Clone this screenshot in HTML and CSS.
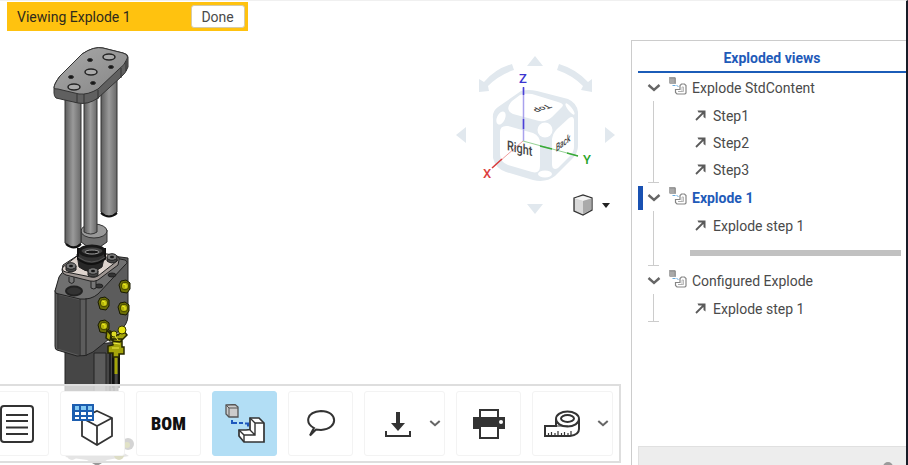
FILE: index.html
```html
<!DOCTYPE html>
<html lang="en">
<head>
<meta charset="utf-8">
<title>Exploded views</title>
<link rel="stylesheet" href="styles.css">
</head>
<body>
<svg class="defs" aria-hidden="true">
  <defs>
    <linearGradient id="rod"><stop offset="0" stop-color="#5c5c5c"/><stop offset=".5" stop-color="#9a9a9a"/><stop offset="1" stop-color="#686868"/></linearGradient>
    <linearGradient id="plate" x2="1" y2="1"><stop offset="0" stop-color="#aaa"/><stop offset="1" stop-color="#858585"/></linearGradient>
    <symbol id="chevron" viewBox="0 0 14 10"><path d="M1.500 2l5.500 5 5.500-5" fill="none" stroke="currentColor" stroke-width="2.400"/></symbol>
    <symbol id="explode-small" viewBox="0 0 18 18">
      <path d="M0 0h6l1 1v6H1L0 6z" fill="#a9a9a9"/><path d="M1 1h5v5" fill="none" stroke="#888" stroke-width=".8"/>
      <path d="M3.500 8.500h4l2 1" fill="none" stroke="#65a9dd" stroke-dasharray="3 1"/>
      <path d="M6.500 12.500h4.500V8.500l1.500-1.500h3l1.500 1.500v7.500l-1 1H8l-1.500-1.500z" fill="#fff" stroke="#858585" stroke-width="1.200"/>
      <path d="M9 14.500h4V10h1.500v4.500z" fill="none" stroke="#aaa" stroke-width=".8"/>
    </symbol>
    <symbol id="step" viewBox="0 0 11 11"><path d="M1 10l7-7" stroke="currentColor" stroke-width="1.800"/><path d="M2.500.500h8v8l-2-1.500V4.500L6.500 2.500h-3z" fill="currentColor"/></symbol>
    <g id="bolt"><path d="M-5-1l2-4 5-1 4 3v6l-3 4-6-1z" fill="#6e7006" stroke="#171800"/><circle cx="1" r="3.800" fill="#b5b50c" stroke="#414200"/><path d="M-1-2l3 1v3" fill="none" stroke="#efed20"/></g>
    <g id="screw"><path d="M-5 0v4q5 4 10 0V0" fill="#444" stroke="#1c1c1c"/><ellipse rx="5" ry="3.300" fill="#777" stroke="#222"/><ellipse rx="2" ry="1.300" fill="#161616"/></g>
  </defs>
</svg>
<div class="app">
  <main class="viewport">
    <svg class="model" width="160" height="465" viewBox="0 0 160 465" role="img" aria-label="Exploded cylinder assembly">
      <g stroke="#333" stroke-width="1">
        <path d="M101 75v137q8 9 16 0V75z" fill="url(#rod)"/>
        <path d="M81 230v12q13 12 26 0v-12z" fill="#707070"/>
        <ellipse cx="94" cy="231" rx="13" ry="7" fill="#999"/>
        <path d="M84 90v142q7 4 13 0V90z" fill="url(#rod)"/>
        <path d="M65 95v148q8 8 16 0V95z" fill="url(#rod)"/>
        <path d="M66 244q8 7 15 0M101 213q8 7 16 0" fill="none" stroke="#111" stroke-width="2"/>
        <path d="M54 88q0-4 6-12l22-22q12-8 21-6l20 5q5 1 5 4v10q-2 6-7 10L98 98q-10 7-20 5l-22-5q-2-2-2-5z" fill="#606060"/>
        <path d="M54 88q0-4 6-12l22-22q12-8 21-6l20 5q6 2 4 6-2 6-9 11L98 89q-10 6-19 5l-21-5q-4 0-4-1z" fill="url(#plate)"/>
        <path d="M77 94v9m7-9v9m14-13v9m23-31v10m5-17v10" fill="none"/>
        <g fill="#aaa" stroke="#252525" stroke-width="1.500"><ellipse cx="109" cy="57" rx="6" ry="3"/><ellipse cx="91" cy="72" rx="6" ry="3"/><ellipse cx="74" cy="87" rx="6" ry="3"/></g>
        <g fill="#151515"><ellipse cx="90" cy="60" rx="2.500" ry="1.500"/><ellipse cx="111" cy="67" rx="2.500" ry="1.500"/><ellipse cx="71" cy="77" rx="2.500" ry="1.500"/><ellipse cx="93" cy="83" rx="2.500" ry="1.500"/></g>
      </g>
      <g stroke="#222">
        <path d="M65 347v93h53v-98z" fill="#464646"/>
        <path d="M94 353h12v87H94z" fill="#5c5c5c"/><path d="M110 345v95M114 345v95" stroke-width="2"/>
        <path d="M55 291l9-22 25-16 39 5v57q0 10-9 16l-26 21q-7 5-16 4l-20-6q-2 0-2-4z" fill="#5c5c5c"/>
        <path d="M55 291l4-14q2-5 9-8l21-16 36 7q4 2 0 5L98 294q-7 6-18 5l-21-5q-4 0-4-3z" fill="#707070"/>
        <path d="M59 295l20 5v55l-20-6z" fill="#444" stroke="none"/>
        <path d="M58 294v55M80 299v57M86 298v58" fill="none"/>
        <ellipse cx="74" cy="291" rx="8" ry="4.500" fill="#333" stroke-width="2"/>
        <ellipse cx="99" cy="286" rx="4" ry="2" fill="#333"/><ellipse cx="112" cy="275" rx="4" ry="2" fill="#333"/>
        <path d="M69 277v5q3 3 5 0v-5M91 281v7q3 2 5 0v-7" fill="#777"/>
        <path d="M62 270l1-5 20-13 31 3q6 1 5 5l-1 5-20 15q-4 2-8 1l-24-6q-4-1-4-5z" fill="#9e9692"/>
        <path d="M63 267l18-14q4-2 8-1l26 3q5 2 2 6l-19 15q-3 2-7 1l-25-5q-5-1-3-5z" fill="#ded4ce"/>
        <path d="M77 254l2 13q12 9 23 0l3-13z" fill="#272727"/>
        <path d="M78 249v10q13 10 27 0v-10z" fill="#333" stroke="#111" stroke-width="2"/>
        <ellipse cx="92" cy="251" rx="12" ry="5" fill="#404040" stroke="#181818" stroke-width="3"/>
        <ellipse cx="92" cy="252" rx="7" ry="2" fill="#161616" stroke="#999"/>
        <path d="M78 257q14 10 27 0" fill="none" stroke="#555"/>
      </g>
      <use href="#screw" x="71" y="266"/><use href="#screw" x="93" y="271"/><use href="#screw" x="112" y="257"/>
      <use href="#bolt" x="124" y="286"/><use href="#bolt" x="103" y="303"/><use href="#bolt" x="123" y="308"/><use href="#bolt" x="103" y="326"/>
      <path d="M116 355v19" stroke="#a4a509" stroke-width="3"/><path d="M113 351v37m6-34v34" stroke="#111" stroke-width="2"/>
      <path d="M107 330l4 5-1 6-4-3zM110 331l8 4 5-5 4 5-7 7-8-1zM113 339h9v8h2v7h-5v3h-6v-4h-5v-7l5-1z" fill="#a5a50b" stroke="#272800" stroke-width="1.500"/>
      <circle cx="122" cy="330" r="4" fill="#e6e312" stroke="#333400"/>
      <circle cx="114" cy="334" r="3" fill="#dedb25" stroke="#333400"/>
      <path d="M112 348h7m-6-5l7 1m-5-8l3 4" stroke="#efed45"/>
      <path d="M65 457l12-8 42 1 10 6-22 4-10 6-10-6z" fill="#999"/>
      <circle cx="128" cy="444" r="6" fill="#555"/><circle cx="127" cy="445" r="3" fill="#888a20"/><circle cx="119" cy="455" r="5" fill="#777a18"/><circle cx="72" cy="455" r="5" fill="#999"/>
    </svg>

    <div class="banner"><span>Viewing Explode 1</span><button type="button" class="done">Done</button></div>

    <div class="navigator">
      <svg width="165" height="170" viewBox="5 8 165 170" role="img" aria-label="View cube">
        <g fill="#e1e8ee">
          <path d="M85 16l8 10H77zM85 174l8-10H77zM6 95l10-8v16zM165 95l-10-8v16z"/>
          <path d="M62 24l2 6Q49 35 38 46l1 5-10 1V39l5 3Q45 29 62 24zM109 24l-2 6q15 5 26 16l-2 4 11 2V39l-4 3Q126 29 109 24z"/>
          <path d="M71 51q7-2 16 0l31 8q9 4 10 13v34q0 7-6 13l-17 17q-9 7-22 4l-27-8q-11-4-13-14V79q-1-8 5-12z"/>
        </g>
        <g fill="#fff">
          <path d="M62 61l8-6q5-2 12-1l26 8q7 2 4 5L102 77q-5 5-13 4l-26-7q-9-4-1-13z"/>
          <path d="M58 86l25 7q7 3 7 10v23q0 8-8 6l-24-7q-8-3-8-11V92q0-7 8-6z"/>
          <path d="M102 99q1-6 5-10l12-11q5-3 5 3v26q0 5-4 9l-12 12q-6 3-6-4z"/>
          <circle cx="95" cy="90" r="7.500"/>
          <ellipse cx="51" cy="78" rx="4" ry="7" transform="rotate(25 51 78)"/>
          <ellipse cx="95" cy="134" rx="7" ry="3.500"/>
          <ellipse cx="120" cy="69" rx="2" ry="7" transform="rotate(-38 120 69)"/>
        </g>
        <path d="M73.500 101V48" stroke="#a9a2ed" stroke-width="1.500"/><path d="M73.500 55v-8m0 42V79" stroke="#4a40d7" stroke-width="1.500"/>
        <path d="M73 101l55 15" stroke="#94d294"/><path d="M90 106l12 3m15 4l11 3" stroke="#38a938" stroke-width="1.500"/>
        <path d="M73 101l-31 27" stroke="#efa0a0"/><path d="M52 119l-10 9" stroke="#d83c3c" stroke-width="1.500"/>
        <text class="axis z" x="69" y="43">Z</text><text class="axis x" x="33" y="138">X</text><text class="axis y" x="133" y="124">Y</text>
        <text class="face" transform="matrix(.9 .22 0 1.150 57 110)">Right</text>
        <text class="face side" transform="matrix(.65 -.5 0 1.100 106 112)">Back</text>
        <text class="face side" transform="matrix(-.85 .35 -.8 -.45 97 64)">Top</text>
      </svg>
      <button type="button" class="view-mode" aria-label="View options">
        <svg width="22" height="22" viewBox="0 0 22 22"><path d="M2 4l9-3 9 3v12l-9 5-9-4z" fill="#ccc" stroke="#333" stroke-width="1.300"/><path d="M2.500 4.500L11 7l8.500-2.500L11 2z" fill="#f4f4f4"/><path d="M11 7l8.500-2.500v11L11 20z" fill="#aaa"/><path d="M3 5l8 2v13l-8-4z" fill="#d9d9d9"/></svg>
        <svg width="8" height="5" viewBox="0 0 8 5"><path d="M0 0h8L4 5z" fill="#222"/></svg>
      </button>
    </div>

    <nav class="toolbar" aria-label="Document tools">
      <button type="button" class="tool" aria-label="Notes"><svg width="36" height="40" viewBox="0 0 36 40"><rect x="2" y="2" width="32" height="36" rx="3" fill="#fff" stroke="#333" stroke-width="2"/><path d="M7 11h22M7 17h22M7 23.500h22M7 30h22" stroke="#333" stroke-width="2"/></svg></button>
      <button type="button" class="tool" aria-label="Configurations"><svg width="44" height="44" viewBox="0 0 44 44"><path d="M26 9l15 7v18l-15 9-15-9V16z" fill="#fff" stroke="#333" stroke-width="1.800"/><path d="M11 16l15 8 15-8M26 24v19" fill="none" stroke="#333" stroke-width="1.800"/><path d="M1 2h22v17H1z" fill="#1d5eb0"/><path d="M4 4h4v4H4zm6 0h5v4h-5zm7 0h4v4h-4z" fill="#83c9f3"/><path d="M4 10h4v3H4zm6 0h5v3h-5zm7 0h4v3h-4zM4 15h4v2H4zm6 0h5v2h-5zm7 0h4v2h-4z" fill="#fff"/></svg></button>
      <button type="button" class="tool bom">BOM</button>
      <button type="button" class="tool active" aria-label="Exploded views"><svg width="40" height="40" viewBox="0 0 40 40"><path d="M1 1l9-.500 3 2.500v10H4l-3-3z" fill="#ccc" stroke="#555" stroke-width="1.300"/><path d="M1 1l3 3h9M4 4v9" fill="none" stroke="#555"/><path d="M7 16v3h5m2 0h4m2 .5h3v3" fill="none" stroke="#1d58bd" stroke-width="2"/><path d="M14 26l7 0 4-.500V14h9l5 5v19H19l-5-6z" fill="#fff" stroke="#333" stroke-width="1.700"/><path d="M14 26l5 5h11V19h9M25 14l5 5M19 31v7M25 26l5 5" fill="none" stroke="#333" stroke-width="1.400"/></svg></button>
      <button type="button" class="tool" aria-label="Comments"><svg width="30" height="28" viewBox="0 0 30 28"><path d="M8 18C-1 13 0 2 15 1c17 0 18 18 0 19l-5-.500-6 6 2-4z" fill="#fff" stroke="#333" stroke-width="2"/></svg></button>
      <button type="button" class="tool wide" aria-label="Export"><svg width="28" height="28" viewBox="0 0 28 28"><path d="M2 21v5h24v-5" fill="none" stroke="#333" stroke-width="2"/><path d="M12 2h4v11h5l-7 8-7-8h5z" fill="#333"/></svg><svg class="caret" width="12" height="9"><use href="#chevron"/></svg></button>
      <button type="button" class="tool" aria-label="Print"><svg width="32" height="32" viewBox="0 0 32 32"><path d="M0 9h32v12H0z" fill="#333"/><path d="M7 9V2h18v7M7 18h18v12H7z" fill="#fff" stroke="#333" stroke-width="2"/><circle cx="28" cy="14" r="2" fill="#fff"/></svg></button>
      <button type="button" class="tool wide" aria-label="Measure"><svg width="36" height="28" viewBox="0 0 36 28"><path d="M12 9v7H1v10h25q9-1 9-7V9" fill="#fff" stroke="#333" stroke-width="2"/><ellipse cx="23.500" cy="9" rx="11.500" ry="7.500" fill="#fff" stroke="#333" stroke-width="2"/><ellipse cx="23.500" cy="8.500" rx="6.500" ry="3.500" fill="#fff" stroke="#333" stroke-width="2"/><path d="M12 16h12M4.500 26v-3m3 3v-4m3.500 4v-3m3 3v-5m3.500 5v-3m3 3v-4m3.500 4v-3m3 3v-5" stroke="#333" stroke-width="1.200"/></svg><svg class="caret" width="12" height="9"><use href="#chevron"/></svg></button>
    </nav>
  </main>

  <aside class="panel">
    <h2>Exploded views</h2>
    <ul class="tree">
      <li>
        <button type="button" class="group"><svg width="14" height="10"><use href="#chevron"/></svg><svg class="kind" width="18" height="18"><use href="#explode-small"/></svg>Explode StdContent</button>
        <ul class="steps">
          <li><svg width="11" height="11"><use href="#step"/></svg>Step1</li>
          <li><svg width="11" height="11"><use href="#step"/></svg>Step2</li>
          <li><svg width="11" height="11"><use href="#step"/></svg>Step3</li>
        </ul>
      </li>
      <li>
        <button type="button" class="group current"><svg width="14" height="10"><use href="#chevron"/></svg><svg class="kind" width="18" height="18"><use href="#explode-small"/></svg>Explode 1</button>
        <ul class="steps">
          <li><svg width="11" height="11"><use href="#step"/></svg>Explode step 1</li>
          <li class="rollback"><span></span></li>
        </ul>
      </li>
      <li>
        <button type="button" class="group"><svg width="14" height="10"><use href="#chevron"/></svg><svg class="kind" width="18" height="18"><use href="#explode-small"/></svg>Configured Explode</button>
        <ul class="steps">
          <li><svg width="11" height="11"><use href="#step"/></svg>Explode step 1</li>
        </ul>
      </li>
    </ul>
    <div class="drawer"><svg width="10" height="3" viewBox="0 0 10 3"><circle cx="5" cy="5" r="5" fill="#9a9a9a"/></svg></div>
  </aside>
</div>
</body>
</html>
```
FILE: styles.css
```css
* { box-sizing: border-box; }
body {
  margin: 0;
  background: #fff;
  color: #4a4a4a;
  font: 14px/20px Roboto, "Liberation Sans", sans-serif;
}
button { font: inherit; color: inherit; border: 0; background: none; padding: 0; }
ul { list-style: none; margin: 0; padding: 0; }
svg { display: block; flex: none; }
.defs { position: absolute; width: 0; height: 0; }

.app {
  display: flex;
  height: 100vh;
  border-top: 1px solid #f0f0f0;
  border-right: 2px solid #181c27;
}

.viewport {
  position: relative;
  flex: 1;
  min-width: 0;
  display: flex;
  flex-direction: column;
  align-items: flex-start;
  justify-content: space-between;
  overflow: hidden;
}
.model { position: absolute; left: 0; top: -1px; }

.banner {
  position: relative;
  display: flex;
  align-items: center;
  gap: 60px;
  margin: 1px 0 0 7px;
  padding: 3px 3px 3px 10px;
  background: #ffc20f;
  color: #2f2a1c;
}
.done {
  width: 54px;
  height: 23px;
  border: 1px solid #d5cba9;
  border-radius: 3px;
  background: #fff;
  color: #4a4a4a;
}

.navigator { position: absolute; top: 47px; right: 11px; }
.view-mode {
  position: absolute;
  right: 10px;
  bottom: 2px;
  display: flex;
  align-items: center;
  gap: 8px;
}
.axis { font-size: 13px; font-weight: 500; }
.axis.x { fill: #dc3f3f; }
.axis.y { fill: #2aa52a; }
.axis.z { fill: #3c35d0; }
.face { font-size: 12px; font-weight: 500; fill: #444; }
.face.side { font-size: 10px; }

.toolbar {
  position: relative;
  align-self: stretch;
  display: flex;
  justify-content: flex-end;
  gap: 11px;
  margin: 0 10px 2px 0;
  padding: 5px 6px;
  border: 2px solid #dedede;
  border-left: 0;
  background: rgba(255, 255, 255, 0.75);
}
.tool {
  flex: none;
  width: 65px;
  height: 65px;
  display: flex;
  align-items: center;
  justify-content: center;
  border: 1px solid #f3f3f3;
  border-radius: 3px;
  background: #fff;
}
.tool.wide {
  width: 81px;
  justify-content: flex-end;
  gap: 17px;
  padding-right: 3px;
}
.tool.active { border-color: #b2def5; background: #b2def5; }
.tool.bom { color: #111; font: 900 18px/24px "Roboto Condensed", Roboto, sans-serif; }
.caret { color: #666; }

.panel {
  flex: none;
  width: 275px;
  margin-top: 39px;
  padding-left: 6px;
  display: flex;
  flex-direction: column;
  border-top: 1px solid #ccc;
  border-left: 1px solid #ccc;
}
.panel h2 {
  margin: 0;
  padding: 7px 0 3px;
  border-bottom: 2px solid #1b5cb8;
  color: #1f5bb9;
  font-size: 14px;
  font-weight: bold;
  line-height: 20px;
  text-align: center;
}
.group {
  position: relative;
  display: flex;
  align-items: center;
  width: 100%;
  height: 29px;
  padding-left: 9px;
}
.kind { margin: 0 5px 3px 8px; }
.group.current { color: #1f5bb9; font-weight: bold; }
.group svg { color: #666; }
.current::before {
  content: "";
  position: absolute;
  left: 0;
  top: 3px;
  width: 5px;
  height: 24px;
  background: #1951b2;
}
.steps { position: relative; padding-left: 57px; }
.steps::before {
  content: "";
  position: absolute;
  left: 15px;
  top: -1px;
  bottom: 0;
  border-left: 1px solid #ccc;
}
.steps::after {
  content: "";
  position: absolute;
  left: 10px;
  bottom: 0;
  width: 11px;
  border-bottom: 1px solid #ccc;
}
.steps li { display: flex; align-items: center; gap: 7px; height: 27px; }
.steps svg { color: #5a5a5a; }
.steps .rollback { margin: 0 5px 0 -5px; }
.rollback span { flex: 1; height: 6px; background: #c1c1c1; }

.drawer {
  display: flex;
  justify-content: flex-end;
  align-items: flex-end;
  height: 19px;
  margin-top: auto;
  padding-right: 13px;
  border: 1px solid #e0e0e0;
  border-width: 1px 0 0 1px;
  background: #ededed;
}
```
